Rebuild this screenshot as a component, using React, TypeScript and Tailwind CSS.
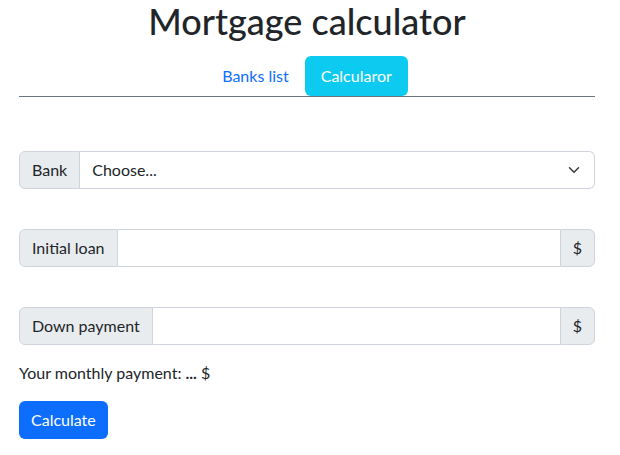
import { useState } from "react";

function Chevron() {
  return (
    <svg width="16" height="12" viewBox="0 0 16 16" fill="none" className="shrink-0">
      <path d="m2 5 6 6 6-6" stroke="#343a40" strokeWidth="2" strokeLinecap="round" strokeLinejoin="round" />
    </svg>
  );
}

function AmountGroup({ label }: { label: string }) {
  return (
    <div className="flex h-[38px] w-full">
      <span className="flex items-center rounded-l-md border border-[#ced4da] bg-[#e9ecef] px-3 whitespace-nowrap">
        {label}
      </span>
      <input
        type="text"
        className="min-w-0 flex-1 border-y border-[#ced4da] bg-white px-3 outline-none"
      />
      <span className="flex items-center rounded-r-md border border-[#ced4da] bg-[#e9ecef] px-3">$</span>
    </div>
  );
}

export default function App() {
  const [tab, setTab] = useState("calc");

  return (
    <div className="min-h-screen bg-white pl-[19px] pr-[25px] text-[16px] leading-6 text-[#212529] [font-family:Lato,'Liberation_Sans',sans-serif]">
      <h1 className="text-center text-[36px] font-medium leading-[1.2] text-[#212529]">Mortgage calculator</h1>

      <nav className="mt-[13px] flex justify-center border-b border-[#6c757d]">
        <button
          onClick={() => setTab("banks")}
          className={`rounded-md px-4 py-2 ${tab === "banks" ? "bg-[#0dcaf0] text-white" : "text-[#0d6efd]"}`}
        >
          Banks list
        </button>
        <button
          onClick={() => setTab("calc")}
          className={`rounded-md px-4 py-2 ${tab === "calc" ? "bg-[#0dcaf0] text-white" : "text-[#0d6efd]"}`}
        >
          Calcularor
        </button>
      </nav>

      <div className="mt-[54px] flex h-[38px] w-full">
        <span className="flex items-center rounded-l-md border border-[#ced4da] bg-[#e9ecef] px-3">Bank</span>
        <div className="flex flex-1 items-center justify-between rounded-r-md border-y border-r border-[#ced4da] bg-white pl-3 pr-3">
          <span>Choose...</span>
          <Chevron />
        </div>
      </div>

      <div className="mt-[40px]">
        <AmountGroup label="Initial loan" />
      </div>
      <div className="mt-[40px]">
        <AmountGroup label="Down payment" />
      </div>

      <p className="mt-4">
        Your monthly payment: <b>...</b> $
      </p>

      <button className="mt-4 h-[38px] rounded-md bg-[#0d6efd] px-3 text-white">Calculate</button>
    </div>
  );
}
